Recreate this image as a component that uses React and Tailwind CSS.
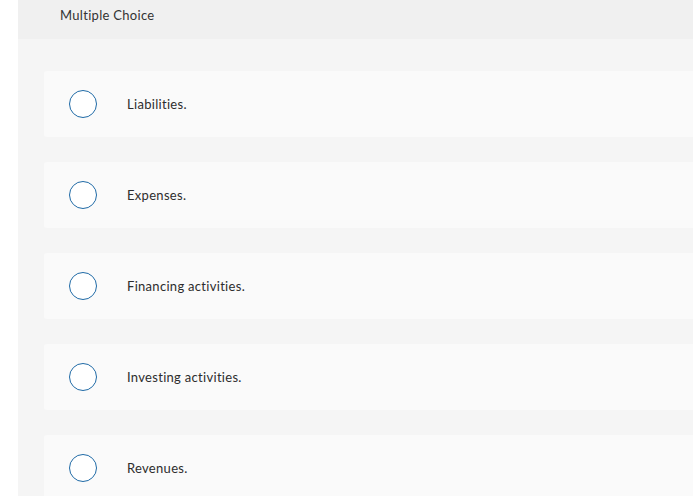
const options = [
  'Liabilities.',
  'Expenses.',
  'Financing activities.',
  'Investing activities.',
  'Revenues.',
]

export default function App() {
  return (
    <div className="h-[496px] w-[693px] overflow-hidden bg-white pl-[18px] [font-variant-ligatures:none]" style={{ fontFamily: 'Lato, "Open Sans", sans-serif' }}>
      <div className="h-full bg-[#f5f5f5]">
        <div className="flex h-[39px] items-start bg-[#f0f0f0] pl-[42px] pt-[6px]">
          <span className="text-[13px] tracking-[0.3px] text-[#333]">Multiple Choice</span>
        </div>
        <div className="flex flex-col gap-[25px] pl-[26px] pt-[32px]">
          {options.map(opt => (
            <div key={opt} className="-mr-4 flex h-[66px] items-center rounded-[3px] bg-[#fafafa] pl-[25px]">
              <span className="h-[28px] w-[28px] shrink-0 rounded-full border-[1.5px] border-[#1f6aa6] bg-white" />
              <span className="ml-[30px] pt-[2px] text-[13px] tracking-[0.3px] text-[#2d2d2d]">{opt}</span>
            </div>
          ))}
        </div>
      </div>
    </div>
  )
}
